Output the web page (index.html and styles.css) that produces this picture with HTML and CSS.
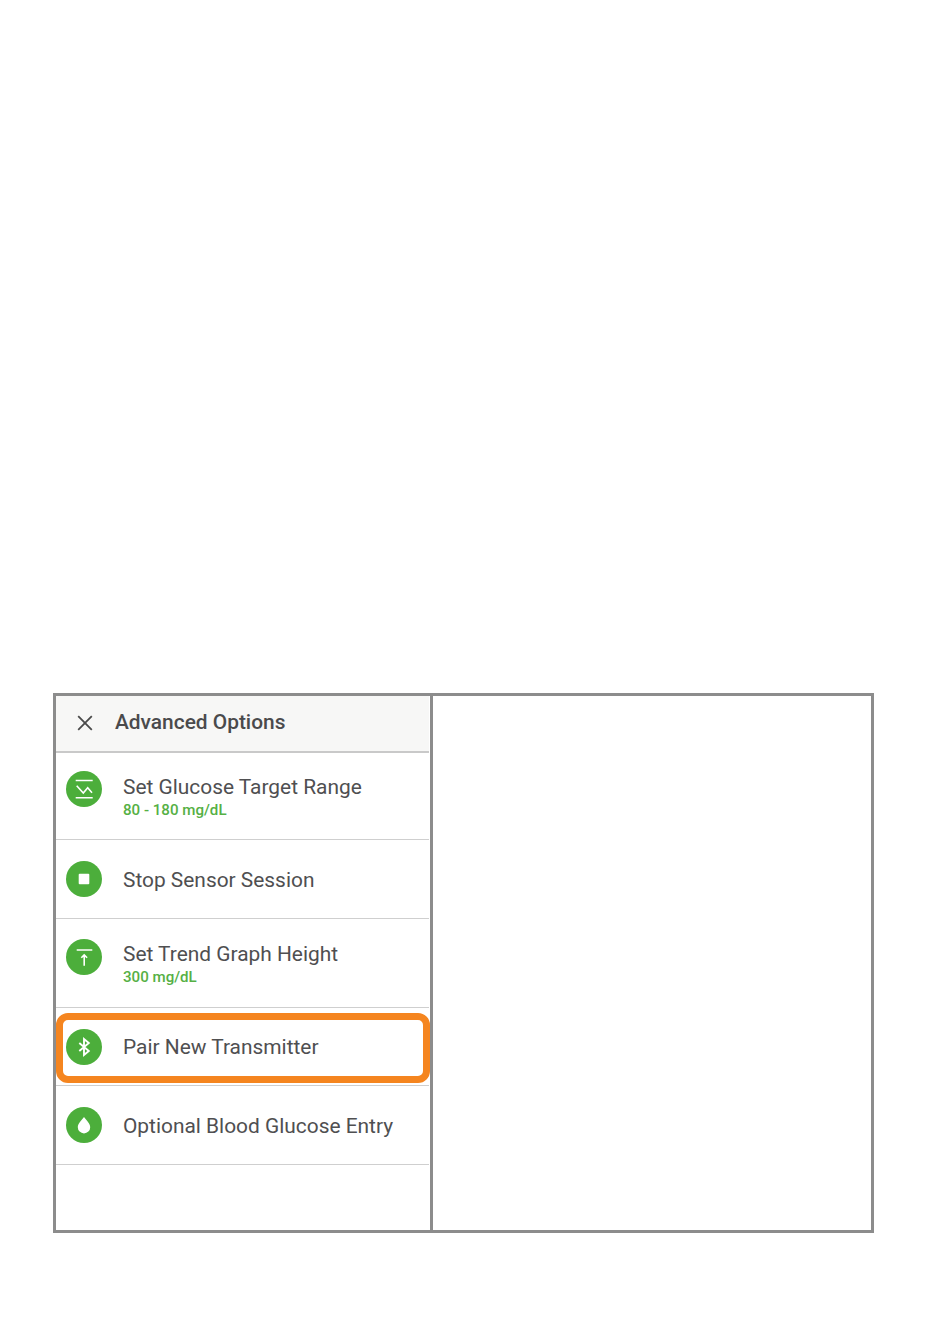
FILE: index.html
```html
<!DOCTYPE html>
<html lang="en">
<head>
<meta charset="utf-8">
<title>Advanced Options</title>
<link rel="stylesheet" href="styles.css">
</head>
<body>
<main class="frame">
  <section class="phone">
    <header class="bar">
      <svg class="close" viewBox="0 0 16 16" aria-hidden="true"><path d="M1.200 1.200 14.800 14.800M14.800 1.200 1.200 14.800"/></svg>
      <h1 class="bar-title">Advanced Options</h1>
    </header>
    <ul class="menu">
      <li class="row row-first">
        <svg class="ico" viewBox="0 0 36 36" aria-hidden="true"><circle class="disc" cx="18" cy="18" r="18"/><path class="glyph thin" d="M9.700 9.500h17M9.700 26.700h17M10.700 14.700 17.300 22 21.700 16.700 26 21.700"/></svg>
        <div class="label"><span class="name">Set Glucose Target Range</span><span class="value">80 - 180 mg/dL</span></div>
      </li>
      <li class="row row-stop">
        <svg class="ico" viewBox="0 0 36 36" aria-hidden="true"><circle class="disc" cx="18" cy="18" r="18"/><rect class="fill" x="12.700" y="12.700" width="10.600" height="10.600" rx="1"/></svg>
        <div class="label"><span class="name">Stop Sensor Session</span></div>
      </li>
      <li class="row row-trend">
        <svg class="ico" viewBox="0 0 36 36" aria-hidden="true"><circle class="disc" cx="18" cy="18" r="18"/><path class="glyph thin" d="M10.700 11h15.600M18.200 26.700V16M15.300 18.800 18.200 15.900l2.900 2.900"/></svg>
        <div class="label"><span class="name">Set Trend Graph Height</span><span class="value">300 mg/dL</span></div>
      </li>
      <li class="row row-pair">
        <svg class="ico" viewBox="0 0 36 36" aria-hidden="true"><circle class="disc" cx="18" cy="18" r="18"/><path class="glyph" d="M13.300 14 22.800 22 18 26V10L22.800 14 13.300 22"/></svg>
        <div class="label"><span class="name">Pair New Transmitter</span></div>
        <div class="mark"></div>
      </li>
      <li class="row row-drop">
        <svg class="ico" viewBox="0 0 36 36" aria-hidden="true"><circle class="disc" cx="18" cy="18" r="18"/><path class="fill" d="M18 10C15.500 13.500 11.800 16.500 11.800 20.200a6.200 6.200 0 0 0 12.400 0C24.200 16.500 20.500 13.500 18 10Z"/></svg>
        <div class="label"><span class="name">Optional Blood Glucose Entry</span></div>
      </li>
    </ul>
  </section>
  <section class="blank"></section>
</main>
</body>
</html>
```
FILE: styles.css
```css
* { box-sizing: border-box; }
html, body { margin: 0; background: #fff; }
body { padding: 693px 76px 0 53px; font-family: Roboto, "Liberation Sans", sans-serif; }

.frame {
  display: grid;
  grid-template-columns: 377px 1fr;
  width: 821px;
  height: 540px;
  border: 3px solid #8c8c8c;
}
.phone { width: 377px; padding-right: 1px; border-right: 3px solid #8c8c8c; }

.bar {
  display: flex;
  align-items: center;
  height: 57px;
  padding: 0 0 2px 21px;
  background: #f7f7f6;
  border-bottom: 2px solid #c9c9c9;
}
.close { width: 16px; height: 16px; fill: none; stroke: #4a4a4a; stroke-width: 1.8; }
.bar-title { margin: 0 0 0 22px; font-size: 20.900px; font-weight: 500; color: #4a4a4c; line-height: 1; }

.menu { list-style: none; margin: 0; padding: 0; }
.row {
  position: relative;
  display: flex;
  align-items: center;
  padding-left: 10px;
  border-bottom: 1px solid #cfcfcf;
}
.row-first { height: 87px; align-items: flex-start; padding-top: 18px; }
.row-first .label { padding-top: 3px; }
.row-stop { height: 79px; }
.row-trend { height: 89px; align-items: flex-start; padding-top: 20px; }
.row-pair { height: 78px; }
.row-drop { height: 79px; }

.ico { width: 36px; height: 36px; flex: none; }
.disc { fill: #4cae3b; }
.fill { fill: #fff; }
.glyph { fill: none; stroke: #fff; stroke-width: 1.9; }
.thin { stroke-width: 1.6; }

.label { display: flex; flex-direction: column; margin-left: 21px; padding-top: 2px; }
.name { font-size: 20.900px; line-height: 27px; color: #4f4f51; white-space: nowrap; }
.value { font-size: 15.100px; font-weight: 500; line-height: 19px; color: #55b044; white-space: nowrap; }

.mark {
  position: absolute;
  left: 0;
  top: 5px;
  width: 374px;
  height: 70px;
  border: 7px solid #f5851f;
  border-radius: 12px;
}
```
